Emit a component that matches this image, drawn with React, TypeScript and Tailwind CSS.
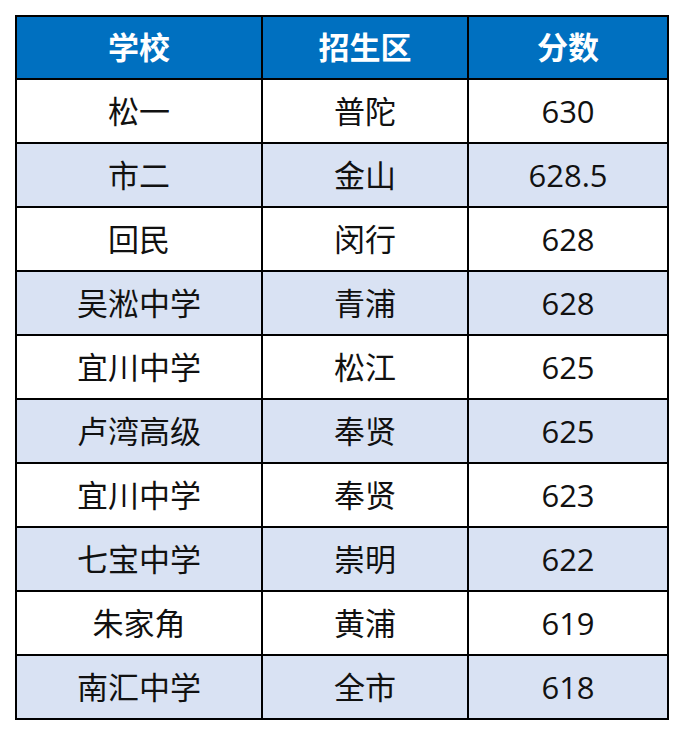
const rows: [string, string, string][] = [
  ["松一", "普陀", "630"],
  ["市二", "金山", "628.5"],
  ["回民", "闵行", "628"],
  ["吴淞中学", "青浦", "628"],
  ["宜川中学", "松江", "625"],
  ["卢湾高级", "奉贤", "625"],
  ["宜川中学", "奉贤", "623"],
  ["七宝中学", "崇明", "622"],
  ["朱家角", "黄浦", "619"],
  ["南汇中学", "全市", "618"],
];

const font = { fontFamily: '"Open Sans", "Noto Sans CJK SC", sans-serif' };

export default function App() {
  return (
    <div className="w-[684px] h-[736px] bg-white pt-[15px] pl-[15px]" style={font}>
      <div className="grid w-[654px] grid-cols-[244px_204px_198px] gap-[2px] bg-black p-[2px]">
        {["学校", "招生区", "分数"].map((h) => (
          <div
            key={h}
            className="flex h-[61px] items-center justify-center bg-[#0070c0] text-[31px] font-bold text-white"
          >
            {h}
          </div>
        ))}
        {rows.map((r, i) =>
          r.map((c, j) => (
            <div
              key={`${i}-${j}`}
              className={`flex h-[62px] items-center justify-center text-[31px] text-[#111] ${
                i % 2 === 1 ? "bg-[#d9e2f3]" : "bg-white"
              }`}
            >
              {c}
            </div>
          ))
        )}
      </div>
    </div>
  );
}
